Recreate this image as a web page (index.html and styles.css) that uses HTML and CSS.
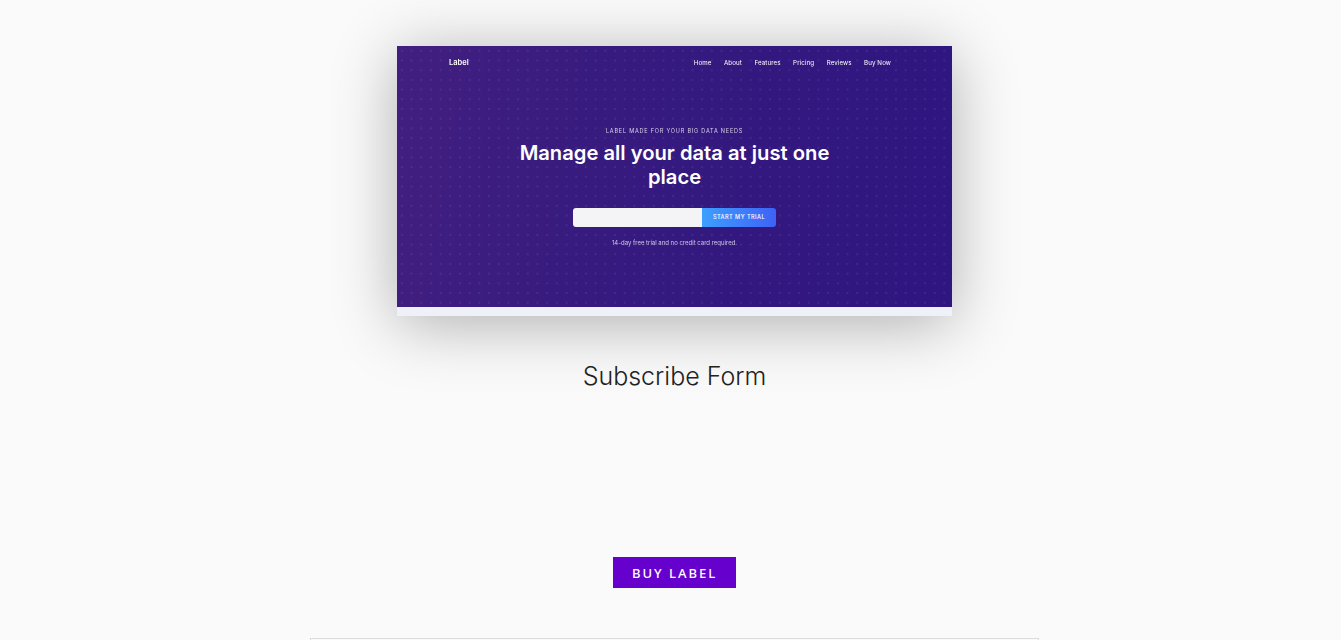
FILE: index.html
```html
<!DOCTYPE html>
<html lang="en">
<head>
    <meta charset="UTF-8">
    <meta name="viewport" content="width=device-width, initial-scale=1.0">
    <title>Label</title>
    <link rel="stylesheet" href="styles.css">
</head>
<body>
    <div class="demo">
        <div class="shot">
            <div class="hero">
                <div class="hero-nav">
                    <span class="brand">Label</span>
                    <div class="nav-links">
                        <span>Home</span>
                        <span>About</span>
                        <span>Features</span>
                        <span>Pricing</span>
                        <span>Reviews</span>
                        <span>Buy Now</span>
                    </div>
                </div>
                <p class="eyebrow">LABEL MADE FOR YOUR BIG DATA NEEDS</p>
                <h2>Manage all your data at just one place</h2>
                <div class="subscribe">
                    <div class="subscribe-input"></div>
                    <div class="subscribe-btn">START MY TRIAL</div>
                </div>
                <p class="note">14-day free trial and no credit card required.</p>
            </div>
            <div class="shot-strip"></div>
        </div>
        <h3 class="demo-title">Subscribe Form</h3>
        <a href="#" class="btn">BUY LABEL</a>
        <div class="next-box"></div>
    </div>
</body>
</html>
```

FILE: styles.css
```css
html, body {
    height: 640px;
    overflow: hidden;
}
body {
    margin: 0;
    background-color: #fafafa;
    font-family: "Inter", sans-serif;
}
.demo {
    width: 729px;
    margin-left: 310px;
    display: flex;
    flex-direction: column;
    align-items: center;
}
.shot {
    width: 555px;
    margin-top: 46px;
    box-shadow: 0px 8px 60px rgba(0, 0, 0, 0.3);
}
.hero {
    height: 261px;
    box-sizing: border-box;
    padding-top: 10px;
    text-align: center;
    color: white;
    background-color: #32197f;
    background-image:
        radial-gradient(circle, rgba(170, 130, 220, 0.14) 0.7px, transparent 1.1px),
        linear-gradient(100deg, #411f80 0%, #34197e 50%, #2e1580 100%);
    background-size: 9.7px 9.7px, 100% 100%;
}
.hero-nav {
    height: 13px;
    display: flex;
    justify-content: space-between;
    align-items: center;
    padding: 0 61px 0 52px;
    filter: blur(0.25px);
}
.brand {
    font-size: 7.5px;
    font-weight: 600;
}
.nav-links {
    display: flex;
    gap: 12.5px;
    font-size: 6.2px;
    font-weight: 400;
    letter-spacing: 0.1px;
}
.eyebrow {
    margin: 58px 0 0;
    font-size: 5.5px;
    line-height: 8px;
    letter-spacing: 0.8px;
    color: #d9d3ea;
    filter: blur(0.2px);
}
h2 {
    width: 340px;
    margin: 6px auto 0;
    font-size: 20.2px;
    line-height: 23.5px;
    font-weight: 600;
}
.subscribe {
    width: 203px;
    height: 19px;
    margin: 20px 0 0 176px;
    display: flex;
    border-radius: 3px;
    overflow: hidden;
}
.subscribe-input {
    flex: 1;
    background: #f4f4f6;
}
.subscribe-btn {
    width: 74px;
    background: linear-gradient(90deg, #3d9fff, #3f62f5);
    font-size: 5.6px;
    font-weight: 500;
    letter-spacing: 0.45px;
    line-height: 19px;
}
.note {
    margin: 12px 0 0;
    font-size: 6px;
    line-height: 8px;
    color: #cfc8e4;
    filter: blur(0.2px);
}
.shot-strip {
    height: 9px;
    background: #eef1f7;
}
.demo-title {
    margin: 45px 0 0;
    font-size: 25px;
    line-height: 30px;
    font-weight: 300;
    color: #222;
}
.btn {
    margin-top: 166px;
    width: 123px;
    height: 31px;
    background: #6600cc;
    color: white;
    text-decoration: none;
    text-align: center;
    font-family: "Noto Sans", sans-serif;
    font-size: 13px;
    font-weight: 500;
    line-height: 32px;
    letter-spacing: 2px;
}
.next-box {
    box-sizing: border-box;
    width: 100%;
    height: 2px;
    margin-top: 50px;
    border: 1px solid #dddddd;
    border-bottom: 0;
}
```
